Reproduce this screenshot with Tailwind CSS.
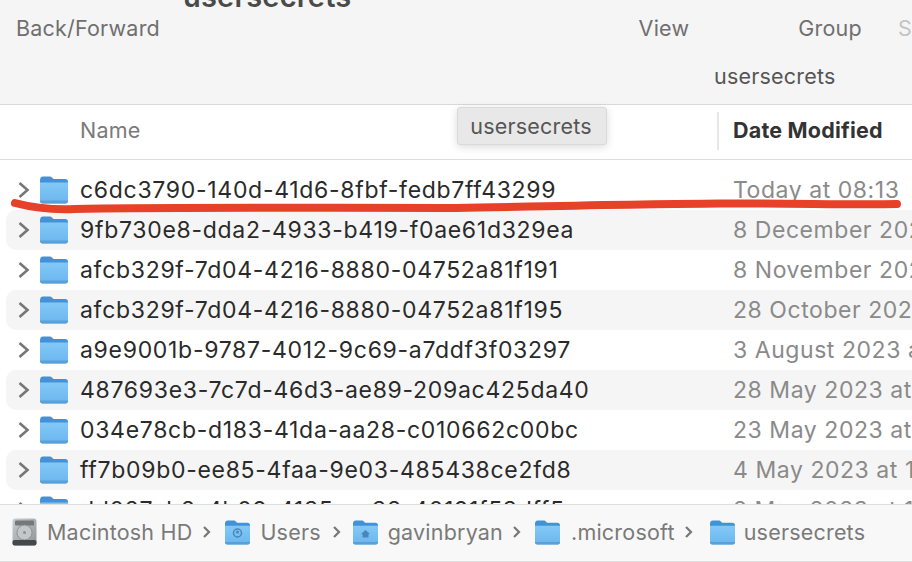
<!DOCTYPE html>
<html lang="en">
<head>
  <meta charset="UTF-8" />
  <title>usersecrets</title>
  <script src="https://cdn.jsdelivr.net/npm/@tailwindcss/browser@4"></script>
</head>
<body class="relative w-[912px] h-[562px] overflow-hidden bg-white font-['Inter','Liberation_Sans',sans-serif] text-[21.5px] tracking-[0.2px]">
  <svg class="absolute w-0 h-0">
    <defs>
      <linearGradient id="folder-body" x1="0" y1="0" x2="0" y2="1">
        <stop offset="0" stop-color="#84c8f7" />
        <stop offset="1" stop-color="#69b6ee" />
      </linearGradient>
      <linearGradient id="disk-body" x1="0" y1="0" x2="1" y2="1">
        <stop offset="0" stop-color="#c9cccf" />
        <stop offset="1" stop-color="#8f9497" />
      </linearGradient>
    </defs>
    <symbol id="folder" viewBox="0 0 28 28">
      <path d="M0 4.500C0 2 1 .5 3 .5h6.500c1.500 0 2 .5 3 1.500l1 1H25c2 0 3 1 3 3v3H0z" fill="#4392d8" />
      <path d="M0 6.500h28V25c0 1.500-1 2.500-2.500 2.500h-23C1 27.500 0 26.500 0 25z" fill="url(#folder-body)" />
      <path d="M0 24.500h28v.5c0 1.500-1 2.500-2.500 2.500h-23C1 27.500 0 26.500 0 25z" fill="#5c9fd4" />
    </symbol>
  </svg>

  <!-- toolbar -->
  <div class="h-[105px] bg-[#f5f5f5] border-b border-[#d9d9d9] text-[#6f6f6f]">
    <div class="h-0 pl-[183px] text-[29px] leading-[20px] font-semibold text-[#4a4a4a]">
      <div class="-translate-y-[13px]">usersecrets</div>
    </div>
    <div class="flex pt-[14px] h-[62px] leading-[28px]">
      <span class="ml-[16px] w-[624px]">Back/Forward</span>
      <span class="w-[160px]">View</span>
      <span class="w-[100px]">Group</span>
      <span class="text-[#c4c4c4]">S</span>
    </div>
    <div class="pl-[714px] leading-[28px] text-[#555]">usersecrets</div>
  </div>

  <!-- column headers -->
  <div class="flex items-center h-[55px] pb-[3px] border-b border-[#dcdcdc]">
    <span class="ml-[80px] w-[637px] text-[#7a7a7a]">Name</span>
    <span class="h-[38px] border-l-2 border-[#e6e6e6]"></span>
    <span class="ml-[14px] font-bold text-[#333] whitespace-nowrap">Date Modified</span>
  </div>

  <!-- rows -->
  <div class="pt-[10px] text-[23px] tracking-[0.7px] text-[#2a2a2a]">
    <div class="flex items-center h-[40px] ml-[6px] overflow-hidden rounded-l-[10px]">
      <svg class="ml-[12px] w-[12px] h-[18px] shrink-0" viewBox="0 0 12 18" fill="none" stroke="#777" stroke-width="2.600"><path d="M1.500 2l8 7-8 7" /></svg>
      <svg class="ml-[10px] w-[28px] h-[28px] shrink-0"><use href="#folder" /></svg>
      <span class="ml-[12px] w-[653px] shrink-0 whitespace-nowrap">c6dc3790-140d-41d6-8fbf-fedb7ff43299</span>
      <span class="whitespace-nowrap tracking-[0.55px] text-[#8a8a8a]">Today at 08:13</span>
    </div>
    <div class="flex items-center h-[40px] ml-[6px] overflow-hidden rounded-l-[10px] bg-[#f5f5f5]">
      <svg class="ml-[12px] w-[12px] h-[18px] shrink-0" viewBox="0 0 12 18" fill="none" stroke="#777" stroke-width="2.600"><path d="M1.500 2l8 7-8 7" /></svg>
      <svg class="ml-[10px] w-[28px] h-[28px] shrink-0"><use href="#folder" /></svg>
      <span class="ml-[12px] w-[653px] shrink-0 whitespace-nowrap">9fb730e8-dda2-4933-b419-f0ae61d329ea</span>
      <span class="whitespace-nowrap tracking-[0.55px] text-[#8a8a8a]">8 December 2023</span>
    </div>
    <div class="flex items-center h-[40px] ml-[6px] overflow-hidden rounded-l-[10px]">
      <svg class="ml-[12px] w-[12px] h-[18px] shrink-0" viewBox="0 0 12 18" fill="none" stroke="#777" stroke-width="2.600"><path d="M1.500 2l8 7-8 7" /></svg>
      <svg class="ml-[10px] w-[28px] h-[28px] shrink-0"><use href="#folder" /></svg>
      <span class="ml-[12px] w-[653px] shrink-0 whitespace-nowrap">afcb329f-7d04-4216-8880-04752a81f191</span>
      <span class="whitespace-nowrap tracking-[0.55px] text-[#8a8a8a]">8 November 2023</span>
    </div>
    <div class="flex items-center h-[40px] ml-[6px] overflow-hidden rounded-l-[10px] bg-[#f5f5f5]">
      <svg class="ml-[12px] w-[12px] h-[18px] shrink-0" viewBox="0 0 12 18" fill="none" stroke="#777" stroke-width="2.600"><path d="M1.500 2l8 7-8 7" /></svg>
      <svg class="ml-[10px] w-[28px] h-[28px] shrink-0"><use href="#folder" /></svg>
      <span class="ml-[12px] w-[653px] shrink-0 whitespace-nowrap">afcb329f-7d04-4216-8880-04752a81f195</span>
      <span class="whitespace-nowrap tracking-[0.55px] text-[#8a8a8a]">28 October 2023</span>
    </div>
    <div class="flex items-center h-[40px] ml-[6px] overflow-hidden rounded-l-[10px]">
      <svg class="ml-[12px] w-[12px] h-[18px] shrink-0" viewBox="0 0 12 18" fill="none" stroke="#777" stroke-width="2.600"><path d="M1.500 2l8 7-8 7" /></svg>
      <svg class="ml-[10px] w-[28px] h-[28px] shrink-0"><use href="#folder" /></svg>
      <span class="ml-[12px] w-[653px] shrink-0 whitespace-nowrap">a9e9001b-9787-4012-9c69-a7ddf3f03297</span>
      <span class="whitespace-nowrap tracking-[0.55px] text-[#8a8a8a]">3 August 2023 at</span>
    </div>
    <div class="flex items-center h-[40px] ml-[6px] overflow-hidden rounded-l-[10px] bg-[#f5f5f5]">
      <svg class="ml-[12px] w-[12px] h-[18px] shrink-0" viewBox="0 0 12 18" fill="none" stroke="#777" stroke-width="2.600"><path d="M1.500 2l8 7-8 7" /></svg>
      <svg class="ml-[10px] w-[28px] h-[28px] shrink-0"><use href="#folder" /></svg>
      <span class="ml-[12px] w-[653px] shrink-0 whitespace-nowrap">487693e3-7c7d-46d3-ae89-209ac425da40</span>
      <span class="whitespace-nowrap tracking-[0.55px] text-[#8a8a8a]">28 May 2023 at</span>
    </div>
    <div class="flex items-center h-[40px] ml-[6px] overflow-hidden rounded-l-[10px]">
      <svg class="ml-[12px] w-[12px] h-[18px] shrink-0" viewBox="0 0 12 18" fill="none" stroke="#777" stroke-width="2.600"><path d="M1.500 2l8 7-8 7" /></svg>
      <svg class="ml-[10px] w-[28px] h-[28px] shrink-0"><use href="#folder" /></svg>
      <span class="ml-[12px] w-[653px] shrink-0 whitespace-nowrap">034e78cb-d183-41da-aa28-c010662c00bc</span>
      <span class="whitespace-nowrap tracking-[0.55px] text-[#8a8a8a]">23 May 2023 at</span>
    </div>
    <div class="flex items-center h-[40px] ml-[6px] overflow-hidden rounded-l-[10px] bg-[#f5f5f5]">
      <svg class="ml-[12px] w-[12px] h-[18px] shrink-0" viewBox="0 0 12 18" fill="none" stroke="#777" stroke-width="2.600"><path d="M1.500 2l8 7-8 7" /></svg>
      <svg class="ml-[10px] w-[28px] h-[28px] shrink-0"><use href="#folder" /></svg>
      <span class="ml-[12px] w-[653px] shrink-0 whitespace-nowrap">ff7b09b0-ee85-4faa-9e03-485438ce2fd8</span>
      <span class="whitespace-nowrap tracking-[0.55px] text-[#8a8a8a]">4 May 2023 at 1</span>
    </div>
    <div class="flex items-start h-[14px] overflow-hidden ml-[6px] leading-[28px]">
      <svg class="ml-[12px] mt-[11px] w-[12px] h-[18px] shrink-0" viewBox="0 0 12 18" fill="none" stroke="#777" stroke-width="2.600"><path d="M1.500 2l8 7-8 7" /></svg>
      <svg class="ml-[10px] mt-[6px] w-[28px] h-[28px] shrink-0"><use href="#folder" /></svg>
      <span class="ml-[12px] mt-[6px] w-[653px] shrink-0 whitespace-nowrap">dd027eb2-4b09-4135-aa38-40191f53dff5</span>
      <span class="mt-[6px] whitespace-nowrap tracking-[0.55px] text-[#8a8a8a]">2 May 2023 at 1</span>
    </div>
  </div>

  <!-- path bar -->
  <div class="absolute left-0 right-0 top-[504px] h-[58px] pb-[2px] bg-[#f8f8f8] border-t border-b border-[#dedede] flex items-center text-[#7a7a7a] whitespace-nowrap">
    <svg class="ml-[12px] w-[25px] h-[28px] shrink-0" viewBox="0 0 25 28">
      <rect x="0.500" y="0.500" width="24" height="27" rx="3" fill="url(#disk-body)" />
      <rect x="3" y="2.500" width="19" height="5" rx="1" fill="#74787b" />
      <circle cx="12.500" cy="14.500" r="7.500" fill="#c4c7ca" stroke="#8d9194" />
      <circle cx="12.500" cy="14.500" r="1.500" fill="#8d9194" />
      <rect x="0.500" y="22" width="24" height="5.500" rx="2" fill="#45484a" />
    </svg>
    <span class="ml-[10px] shrink-0">Macintosh HD</span>
    <svg class="ml-[10px] w-[10px] h-[14px] shrink-0" viewBox="0 0 10 14" fill="none" stroke="#777" stroke-width="2.200"><path d="M2 2l5 5-5 5" /></svg>
    <svg class="ml-[13px] w-[25px] h-[25px] shrink-0" viewBox="0 0 25 25">
      <use href="#folder" width="25" height="25" />
      <circle cx="12.500" cy="13" r="4" fill="none" stroke="#4a86b8" stroke-width="1.500" />
      <circle cx="12.500" cy="12" r="1.500" fill="#4a86b8" />
    </svg>
    <span class="ml-[10px] shrink-0">Users</span>
    <svg class="ml-[11px] w-[10px] h-[14px] shrink-0" viewBox="0 0 10 14" fill="none" stroke="#777" stroke-width="2.200"><path d="M2 2l5 5-5 5" /></svg>
    <svg class="ml-[11px] w-[25px] h-[25px] shrink-0" viewBox="0 0 25 25">
      <use href="#folder" width="25" height="25" />
      <path d="M8 14l4.500-4 4.500 4h-1.500v3.500h-6V14z" fill="#4a86b8" />
    </svg>
    <span class="ml-[10px] shrink-0">gavinbryan</span>
    <svg class="ml-[9px] w-[10px] h-[14px] shrink-0" viewBox="0 0 10 14" fill="none" stroke="#777" stroke-width="2.200"><path d="M2 2l5 5-5 5" /></svg>
    <svg class="ml-[13px] w-[25px] h-[25px] shrink-0"><use href="#folder" /></svg>
    <span class="ml-[11px] shrink-0">.microsoft</span>
    <svg class="ml-[9px] w-[10px] h-[14px] shrink-0" viewBox="0 0 10 14" fill="none" stroke="#777" stroke-width="2.200"><path d="M2 2l5 5-5 5" /></svg>
    <svg class="ml-[16px] w-[25px] h-[25px] shrink-0"><use href="#folder" /></svg>
    <span class="ml-[9px] shrink-0">usersecrets</span>
  </div>

  <!-- drag tooltip -->
  <div class="absolute left-[457px] top-[107px] w-[150px] h-[38px] pr-[2px] flex items-center justify-center rounded-[3px] bg-[#e8e8e8] border border-[#dadada] shadow-[0_2px_8px_rgba(0,0,0,0.15)] text-[#555]">usersecrets</div>

  <!-- red marker line -->
  <svg class="absolute left-0 top-[190px] w-[912px] h-[30px]" viewBox="0 190 912 30" fill="none">
    <path d="M15 203C30 207 52 210 75 209C150 207 300 208 456 208C560 206 640 204 720 203.500C790 203 850 205 897 204" stroke="#e8412a" stroke-width="8" stroke-linecap="round" />
  </svg>
</body>
</html>
